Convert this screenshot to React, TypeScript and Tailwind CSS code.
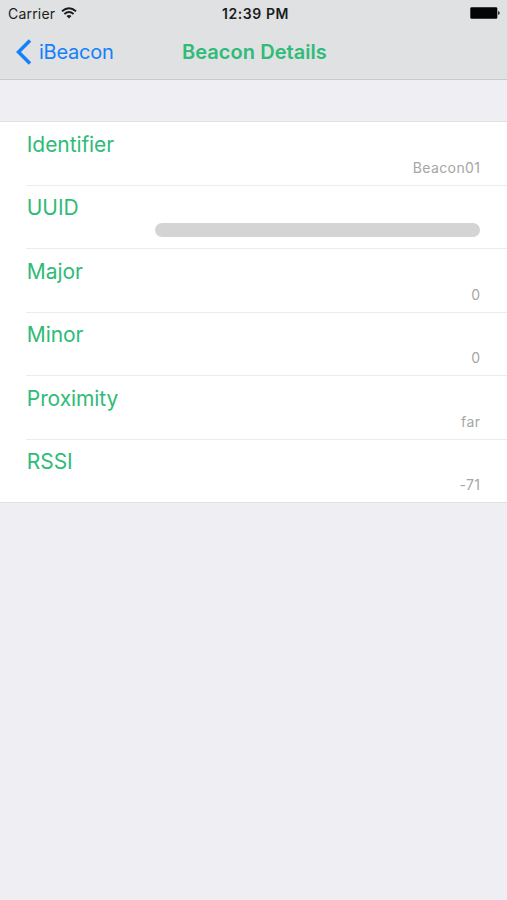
const rows = [
  { label: 'Identifier', value: 'Beacon01' },
  { label: 'UUID', value: '' },
  { label: 'Major', value: '0' },
  { label: 'Minor', value: '0' },
  { label: 'Proximity', value: 'far' },
  { label: 'RSSI', value: '-71' },
];

export default function App() {
  return (
    <main className="flex h-[900px] w-full flex-col overflow-hidden bg-[#eeeef3] font-['Inter',sans-serif]">
      <header className="flex h-20 shrink-0 flex-col border-b border-[#c9cacc] bg-[#dfe1e2]">
        <div className="grid h-[27px] grid-cols-3 items-center pl-2 pr-[7px] text-[14px] text-[#1b1c1d]">
          <div className="flex items-center gap-[6px]">
            <span className="tracking-[0.2px]">Carrier</span>
            <svg className="-mt-[2px]" width="16" height="12" viewBox="0 0 16 12" fill="none" stroke="currentColor" strokeWidth="1.9">
              <path d="M1 4.3Q8-1.8 15 4.3M3.4 6.9Q8 3.2 12.6 6.9" />
              <path d="M8 11.5 5.5 9Q8 7 10.5 9Z" fill="currentColor" stroke="none" />
            </svg>
          </div>
          <span className="pl-[3px] text-center font-semibold tracking-[0.6px]">12:39 PM</span>
          <svg className="-mt-px justify-self-end" width="30" height="12" viewBox="0 0 30 12">
            <rect x="0.3" y="0.3" width="27" height="11.4" rx="1.3" fill="#050505" />
            <path d="M28 4q1.8.5 1.8 2T28 8Z" fill="#333" />
          </svg>
        </div>
        <div className="flex h-[50px] items-center pl-4">
          <button className="flex w-[98px] items-center gap-[7px] text-[20px] tracking-[-0.25px] text-[#1580fb]">
            <svg width="16" height="26" viewBox="0 0 16 26" fill="none" stroke="currentColor" strokeWidth="3.5"><path d="M14 1.5 2.5 13 14 24.5" /></svg>
            <span>iBeacon</span>
          </button>
          <h1 className="ml-[68px] text-[20px] font-semibold tracking-[0.05px] text-[#2fbb78]">Beacon Details</h1>
        </div>
      </header>
      <section className="mt-[41px] border-y border-t-[#e2e2e5] border-b-[#e2e2e5] bg-white">
        {rows.map((row) => (
          <div key={row.label} className="group pl-[26px]">
            <div className="h-[63.5px] border-b border-[#ececee] pr-[27px] group-last:h-[62.5px] group-last:border-b-0">
              <h2 className="pl-[0.8px] pt-[8.5px] text-[21px] leading-7 tracking-[-0.08px] text-[#2fbb78]">{row.label}</h2>
              <div className="-mt-[1.5px] flex h-[18px] items-center justify-end text-[14px] tracking-[0.4px] text-[#a6a6a6]">
                {row.value ? (
                  <span className="-mr-[0.4px] pt-[2px]">{row.value}</span>
                ) : (
                  <span className="h-[14px] w-[325px] rounded-full bg-[#d4d4d4]" />
                )}
              </div>
            </div>
          </div>
        ))}
      </section>
    </main>
  );
}
